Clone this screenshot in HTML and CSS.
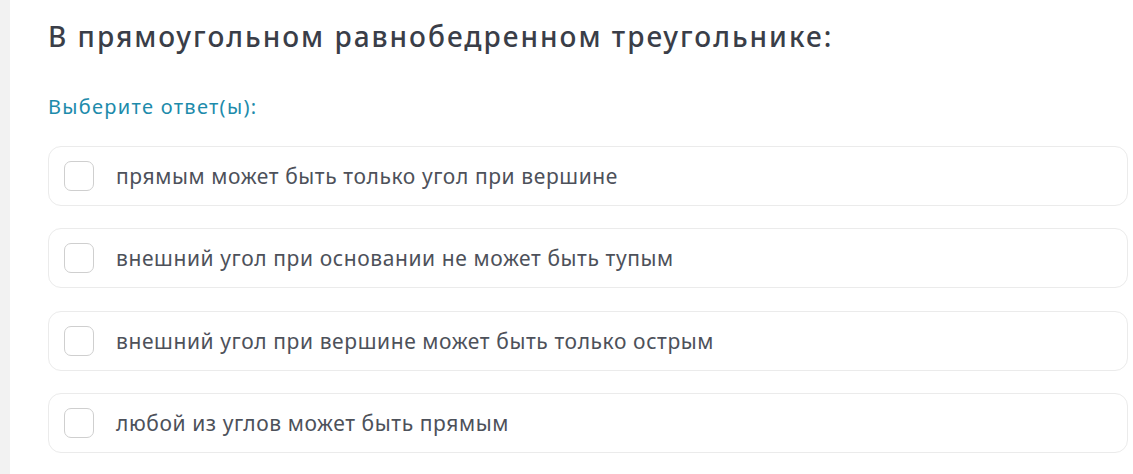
FILE: index.html
```html
<!DOCTYPE html>
<html lang="ru">
<head>
<meta charset="utf-8">
<link rel="stylesheet" href="styles.css">
</head>
<body>
<div class="page">
  <div class="strip"></div>
  <main class="main">
    <h1 class="title">В прямоугольном равнобедренном треугольнике:</h1>
    <div class="hint">Выберите ответ(ы):</div>
    <div class="options">
      <label class="option"><span class="box"></span><span class="text">прямым может быть только угол при вершине</span></label>
      <label class="option"><span class="box"></span><span class="text">внешний угол при основании не может быть тупым</span></label>
      <label class="option"><span class="box"></span><span class="text">внешний угол при вершине может быть только острым</span></label>
      <label class="option"><span class="box"></span><span class="text">любой из углов может быть прямым</span></label>
    </div>
  </main>
</div>
</body>
</html>
```
FILE: styles.css
```css
html, body {
  margin: 0;
  padding: 0;
  background: #fff;
}
.page {
  display: flex;
  min-height: 474px;
  font-family: "Noto Sans", "Open Sans", sans-serif;
}
.strip {
  width: 10px;
  flex: none;
  background: #f2f2f2;
}
.main {
  flex: 1;
  padding: 16px 5px 0 38px;
}
.title {
  margin: 0;
  font-size: 28px;
  line-height: 40px;
  font-weight: 500;
  letter-spacing: 2px;
  color: #3a3e48;
}
.hint {
  margin-top: 39px;
  font-size: 20px;
  line-height: 24px;
  letter-spacing: 1.3px;
  color: #1d8bab;
}
.options {
  margin-top: 27px;
  display: flex;
  flex-direction: column;
  gap: 22.4px;
}
.option {
  display: flex;
  align-items: center;
  gap: 22px;
  height: 58px;
  padding: 0 15px;
  border: 1px solid #ebebeb;
  border-radius: 13px;
}
.box {
  width: 28px;
  height: 28px;
  border: 1px solid #cfcfcf;
  border-radius: 7px;
  flex: none;
}
.text {
  font-size: 21px;
  letter-spacing: 0.6px;
  color: #4d515a;
}
```
